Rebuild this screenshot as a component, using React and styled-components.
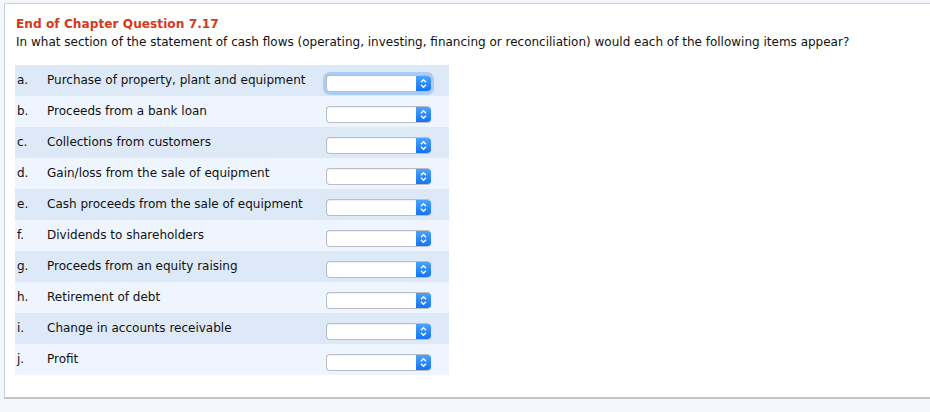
import React from "react";
import styled, { createGlobalStyle } from "styled-components";

const Global = createGlobalStyle`
  html, body { margin: 0; padding: 0; background: #f3f7fb; }
  body { font-family: Verdana, "DejaVu Sans", sans-serif; color: #111; }
`;

const Page = styled.div`
  padding: 3px 0 0 4px;
  height: 412px;
  box-sizing: border-box;
  overflow: hidden;
`;

const Panel = styled.div`
  background: #fff;
  border: 1px solid #cbd1da;
  border-bottom: 2px solid #bfc4cb;
  border-right: none;
  height: 393px;
  box-sizing: content-box;
  padding: 0 0 0 10px;
`;

const Title = styled.h2`
  margin: 0;
  padding-top: 12px;
  font-size: 12.2px;
  line-height: 16px;
  font-weight: bold;
  color: #d5391c;
  padding-left: 1px;
`;

const Prompt = styled.p`
  margin: 2px 0 0;
  font-size: 12px;
  line-height: 16px;
  padding-left: 1px;
`;

const Table = styled.div`
  margin-top: 15px;
  width: 434px;
`;

const Row = styled.div`
  display: grid;
  grid-template-columns: 32px 1fr 123px;
  height: 31px;
  box-sizing: border-box;
  padding-top: 8px;
  background: ${(p) => (p.$shade ? "#dde9f6" : "#eef5fe")};
  font-size: 12px;
  line-height: 15px;
`;

const Letter = styled.span`
  padding-left: 2px;
`;

const Item = styled.span``;

const SelectWrap = styled.div`
  display: flex;
  width: 105px;
  height: 17px;
  margin-top: 2px;
  box-sizing: border-box;
  border: 1px solid #b9bdc5;
  border-right: none;
  border-radius: 4px;
  overflow: hidden;
  background: #fff;
  box-shadow: ${(p) =>
    p.$focus ? "0 0 0 3px rgba(120, 178, 245, 0.5)" : "inset 0 1px 1px rgba(0,0,0,0.06)"};
`;

const NativeSelect = styled.select`
  flex: 1;
  min-width: 0;
  border: none;
  appearance: none;
  background: transparent;
  font: inherit;
  font-size: 11px;
  outline: none;
  padding: 0 4px;
`;

const Arrow = styled.span`
  width: 15px;
  display: flex;
  align-items: center;
  justify-content: center;
  background: linear-gradient(#4aa3fb, #1673f2);
`;

const items = [
  ["a.", "Purchase of property, plant and equipment"],
  ["b.", "Proceeds from a bank loan"],
  ["c.", "Collections from customers"],
  ["d.", "Gain/loss from the sale of equipment"],
  ["e.", "Cash proceeds from the sale of equipment"],
  ["f.", "Dividends to shareholders"],
  ["g.", "Proceeds from an equity raising"],
  ["h.", "Retirement of debt"],
  ["i.", "Change in accounts receivable"],
  ["j.", "Profit"],
];

const Chevrons = () => (
  <svg width="7" height="11" viewBox="0 0 7 11">
    <path d="M1 4.2 L3.5 1.7 L6 4.2" fill="none" stroke="#fff" strokeWidth="1.3" />
    <path d="M1 6.8 L3.5 9.3 L6 6.8" fill="none" stroke="#fff" strokeWidth="1.3" />
  </svg>
);

export default function App() {
  return (
    <Page>
      <Global />
      <Panel>
        <Title>End of Chapter Question 7.17</Title>
        <Prompt>
          In what section of the statement of cash flows (operating, investing, financing or
          reconciliation) would each of the following items appear?
        </Prompt>
        <Table>
          {items.map(([l, t], i) => (
            <Row key={l} $shade={i % 2 === 0}>
              <Letter>{l}</Letter>
              <Item>{t}</Item>
              <SelectWrap $focus={i === 0}>
                <NativeSelect defaultValue="">
                  <option value=""></option>
                  <option>Operating</option>
                  <option>Investing</option>
                  <option>Financing</option>
                  <option>Reconciliation</option>
                </NativeSelect>
                <Arrow>
                  <Chevrons />
                </Arrow>
              </SelectWrap>
            </Row>
          ))}
        </Table>
      </Panel>
    </Page>
  );
}
